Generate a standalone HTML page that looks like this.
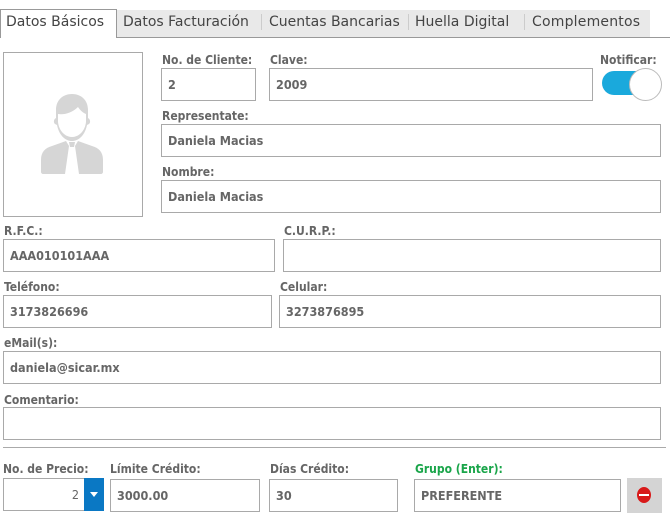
<!DOCTYPE html>
<html><head><meta charset="utf-8"><style>
*{box-sizing:border-box;margin:0;padding:0}
body{width:670px;height:524px;background:#fff;position:relative;overflow:hidden;font-family:"DejaVu Sans Condensed","DejaVu Sans","Liberation Sans",sans-serif;color:#555}
.a{position:absolute}
.lbl{position:absolute;font-size:12px;color:#666;line-height:14px;font-weight:bold}
.in{position:absolute;border:1px solid #a9a9a9;background:#fff;font-size:12.5px;font-weight:bold;color:#666;padding-left:6px;display:flex;align-items:center}
.tabs{position:absolute;top:10px;left:116px;width:534px;height:27px;background:#e9e9e9}
.tab{position:absolute;top:10px;height:27px;font-family:"DejaVu Sans",sans-serif;font-size:14px;color:#444;line-height:24px}
.sep{position:absolute;top:14px;width:1px;height:16px;background:#ccc}
</style></head><body>
<div class="tabs"></div>
<div class="a" style="left:116px;top:37px;width:554px;height:1px;background:#999"></div>
<div class="a" style="left:0;top:9px;width:117px;height:29px;border:1px solid #999;border-bottom:none;background:#fff"></div>
<div class="tab" style="left:6px">Datos Básicos</div>
<div class="tab" style="left:123px">Datos Facturación</div>
<div class="sep" style="left:261px"></div>
<div class="tab" style="left:269px">Cuentas Bancarias</div>
<div class="sep" style="left:408px"></div>
<div class="tab" style="left:415px">Huella Digital</div>
<div class="sep" style="left:524px;"></div>
<div class="tab" style="left:532px;letter-spacing:0.2px">Complementos</div>

<div class="a" style="left:3px;top:52px;width:140px;height:165px;border:1px solid #a9a9a9"></div>
<svg class="a" style="left:38px;top:92px" width="68" height="84" viewBox="0 0 68 84">
<path fill="#d6d6d6" d="M34 2c-9 0-16 6-16 16v8c-2 1-3 4-1 6l2 1c2 10 8 16 15 16s13-6 15-16l2-1c2-2 1-5-1-6v-8C50 8 43 2 34 2zM20 22c6 1 14-1 20-7 2 3 5 6 8 7v8c-1 9-7 15-14 15S21 39 20 30z"/>
<path fill="#d6d6d6" d="M28 49l-14 5C7 56 3 60 3 68v12c0 1 1 2 2 2h22l4-28zM40 49l14 5c7 2 11 6 11 14v12c0 1-1 2-2 2H41l-4-28zM31 50h6l-1 5h-4z"/>
</svg>

<div class="lbl" style="left:162px;top:53px">No. de Cliente:</div>
<div class="in" style="left:161px;top:68px;width:95px;height:33px">2</div>
<div class="lbl" style="left:270px;top:53px">Clave:</div>
<div class="in" style="left:269px;top:68px;width:324px;height:33px">2009</div>
<div class="lbl" style="left:600px;top:53px">Notificar:</div>
<div class="a" style="left:602px;top:71px;width:50px;height:24px;border-radius:12px;background:#1aa9dc"></div>
<div class="a" style="left:629px;top:68px;width:33px;height:33px;border-radius:50%;background:#fff;border:1px solid #bbb"></div>

<div class="lbl" style="left:162px;top:109px">Representate:</div>
<div class="in" style="left:161px;top:124px;width:500px;height:33px">Daniela Macias</div>
<div class="lbl" style="left:162px;top:165px">Nombre:</div>
<div class="in" style="left:161px;top:180px;width:500px;height:33px">Daniela Macias</div>

<div class="lbl" style="left:4px;top:224px">R.F.C.:</div>
<div class="in" style="left:3px;top:239px;width:272px;height:33px">AAA010101AAA</div>
<div class="lbl" style="left:284px;top:224px">C.U.R.P.:</div>
<div class="in" style="left:283px;top:239px;width:378px;height:33px"></div>

<div class="lbl" style="left:4px;top:280px">Teléfono:</div>
<div class="in" style="left:3px;top:295px;width:269px;height:33px">3173826696</div>
<div class="lbl" style="left:280px;top:280px">Celular:</div>
<div class="in" style="left:279px;top:295px;width:382px;height:33px">3273876895</div>

<div class="lbl" style="left:4px;top:336px">eMail(s):</div>
<div class="in" style="left:3px;top:351px;width:658px;height:33px">daniela@sicar.mx</div>
<div class="lbl" style="left:4px;top:393px">Comentario:</div>
<div class="in" style="left:3px;top:407px;width:658px;height:33px"></div>

<div class="a" style="left:3px;top:447px;width:663px;height:1px;background:#aaa"></div>

<div class="lbl" style="left:3px;top:462px">No. de Precio:</div>
<div class="in" style="left:3px;top:478px;width:101px;height:33px;justify-content:flex-end;padding-right:24px;font-weight:normal">2</div>
<div class="a" style="left:84px;top:478px;width:20px;height:33px;background:#0a78c4"></div>
<div class="a" style="left:90px;top:492px;width:0;height:0;border-left:4px solid transparent;border-right:4px solid transparent;border-top:5px solid #fff"></div>
<div class="lbl" style="left:110px;top:462px">Límite Crédito:</div>
<div class="in" style="left:110px;top:479px;width:150px;height:33px">3000.00</div>
<div class="lbl" style="left:270px;top:462px">Días Crédito:</div>
<div class="in" style="left:269px;top:479px;width:129px;height:33px">30</div>
<div class="lbl" style="left:415px;top:462px;color:#1aa54a">Grupo (Enter):</div>
<div class="in" style="left:414px;top:479px;width:207px;height:33px">PREFERENTE</div>
<div class="a" style="left:627px;top:478px;width:35px;height:35px;background:#d4d4d4"></div>
<div class="a" style="left:637px;top:487px;width:14px;height:16px;border-radius:50%;background:#d81a1a"></div>
<div class="a" style="left:639px;top:494px;width:10px;height:2px;background:#fff"></div>
</body></html>
